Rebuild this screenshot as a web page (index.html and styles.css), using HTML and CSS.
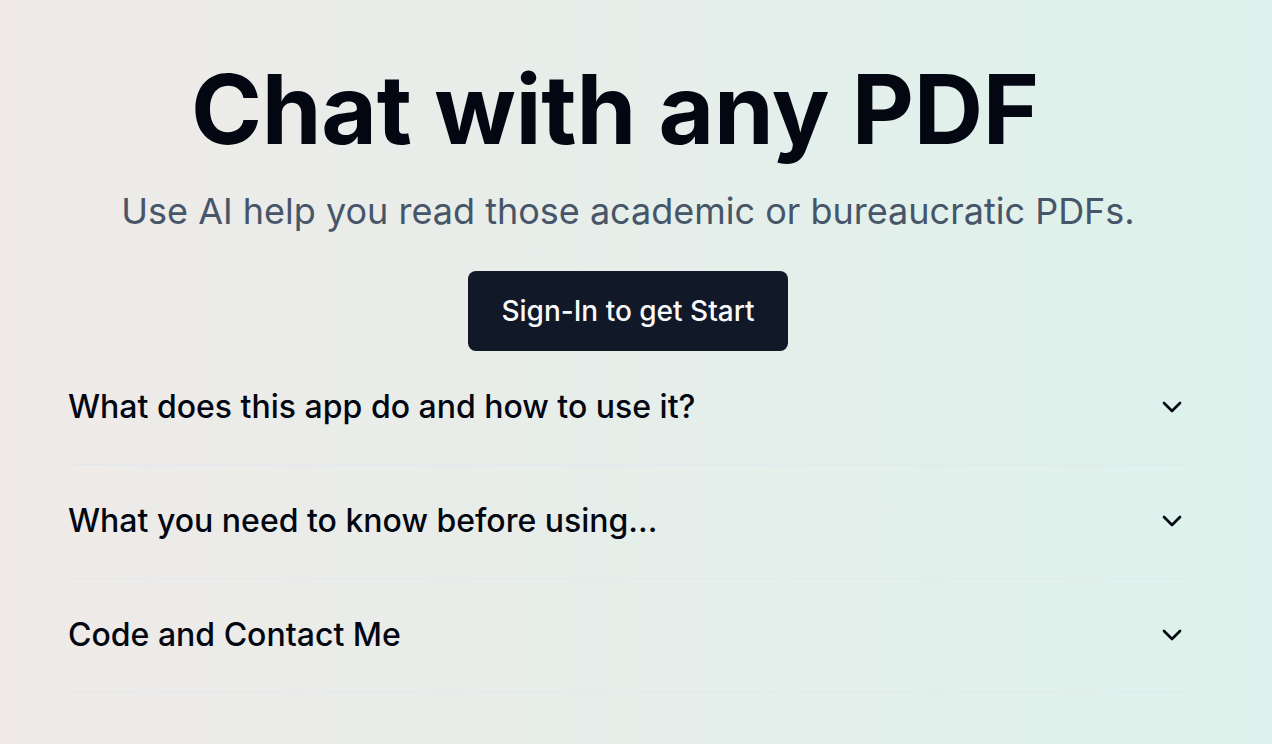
FILE: index.html
```html
<!DOCTYPE html>
<html lang="en">
<head>
<meta charset="utf-8">
<title>Chat with any PDF</title>
<link rel="stylesheet" href="styles.css">
</head>
<body>
<main class="page">
  <section class="hero">
    <h1 class="title">Chat with any PDF</h1>
    <p class="subtitle">Use AI help you read those academic or bureaucratic PDFs.</p>
    <button class="cta" type="button">Sign-In to get Start</button>
  </section>
  <div class="accordion">
    <div class="item">
      <button class="trigger" type="button">
        <span>What does this app do and how to use it?</span>
        <svg class="chevron" viewBox="0 0 24 24" width="32" height="32" fill="none" stroke="currentColor" stroke-width="2" stroke-linecap="round" stroke-linejoin="round"><path d="m6 9 6 6 6-6"/></svg>
      </button>
    </div>
    <div class="item">
      <button class="trigger" type="button">
        <span>What you need to know before using...</span>
        <svg class="chevron" viewBox="0 0 24 24" width="32" height="32" fill="none" stroke="currentColor" stroke-width="2" stroke-linecap="round" stroke-linejoin="round"><path d="m6 9 6 6 6-6"/></svg>
      </button>
    </div>
    <div class="item">
      <button class="trigger" type="button">
        <span>Code and Contact Me</span>
        <svg class="chevron" viewBox="0 0 24 24" width="32" height="32" fill="none" stroke="currentColor" stroke-width="2" stroke-linecap="round" stroke-linejoin="round"><path d="m6 9 6 6 6-6"/></svg>
      </button>
    </div>
  </div>
</main>
</body>
</html>
```
FILE: styles.css
```css
* { box-sizing: border-box; }
html, body { margin: 0; padding: 0; }
body {
  min-height: 744px;
  background: linear-gradient(to right, #efeae8, #ddf2ec);
  font-family: Inter, "Noto Sans", sans-serif;
  color: #030712;
}
.page {
  width: 1256px;
  padding-top: 61px;
  display: flex;
  flex-direction: column;
  align-items: center;
}
.hero {
  display: flex;
  flex-direction: column;
  align-items: center;
}
.title {
  margin: 0 26px 0 0;
  font-size: 96px;
  line-height: 96px;
  font-weight: 700;
  letter-spacing: -0.25px;
  color: #030712;
}
.subtitle {
  margin: 34px 0 0;
  font-size: 36px;
  line-height: 40px;
  font-weight: 400;
  color: #475569;
}
.cta {
  margin-top: 40px;
  width: 320px;
  height: 80px;
  border: 0;
  border-radius: 8px;
  background: #111827;
  color: #f9fafb;
  font-family: Inter, "Noto Sans", sans-serif;
  font-size: 28px;
  font-weight: 500;
}
.accordion {
  width: 1120px;
}
.item {
  border-bottom: 1px solid #e2e8f0;
}
.trigger {
  display: flex;
  width: 100%;
  align-items: center;
  justify-content: space-between;
  padding: 38px 0 39px;
  border: 0;
  background: transparent;
  font-family: Inter, "Noto Sans", sans-serif;
  font-size: 32px;
  line-height: 36px;
  font-weight: 500;
  color: #030712;
  text-align: left;
}
.chevron {
  flex-shrink: 0;
  color: #030712;
}
```
